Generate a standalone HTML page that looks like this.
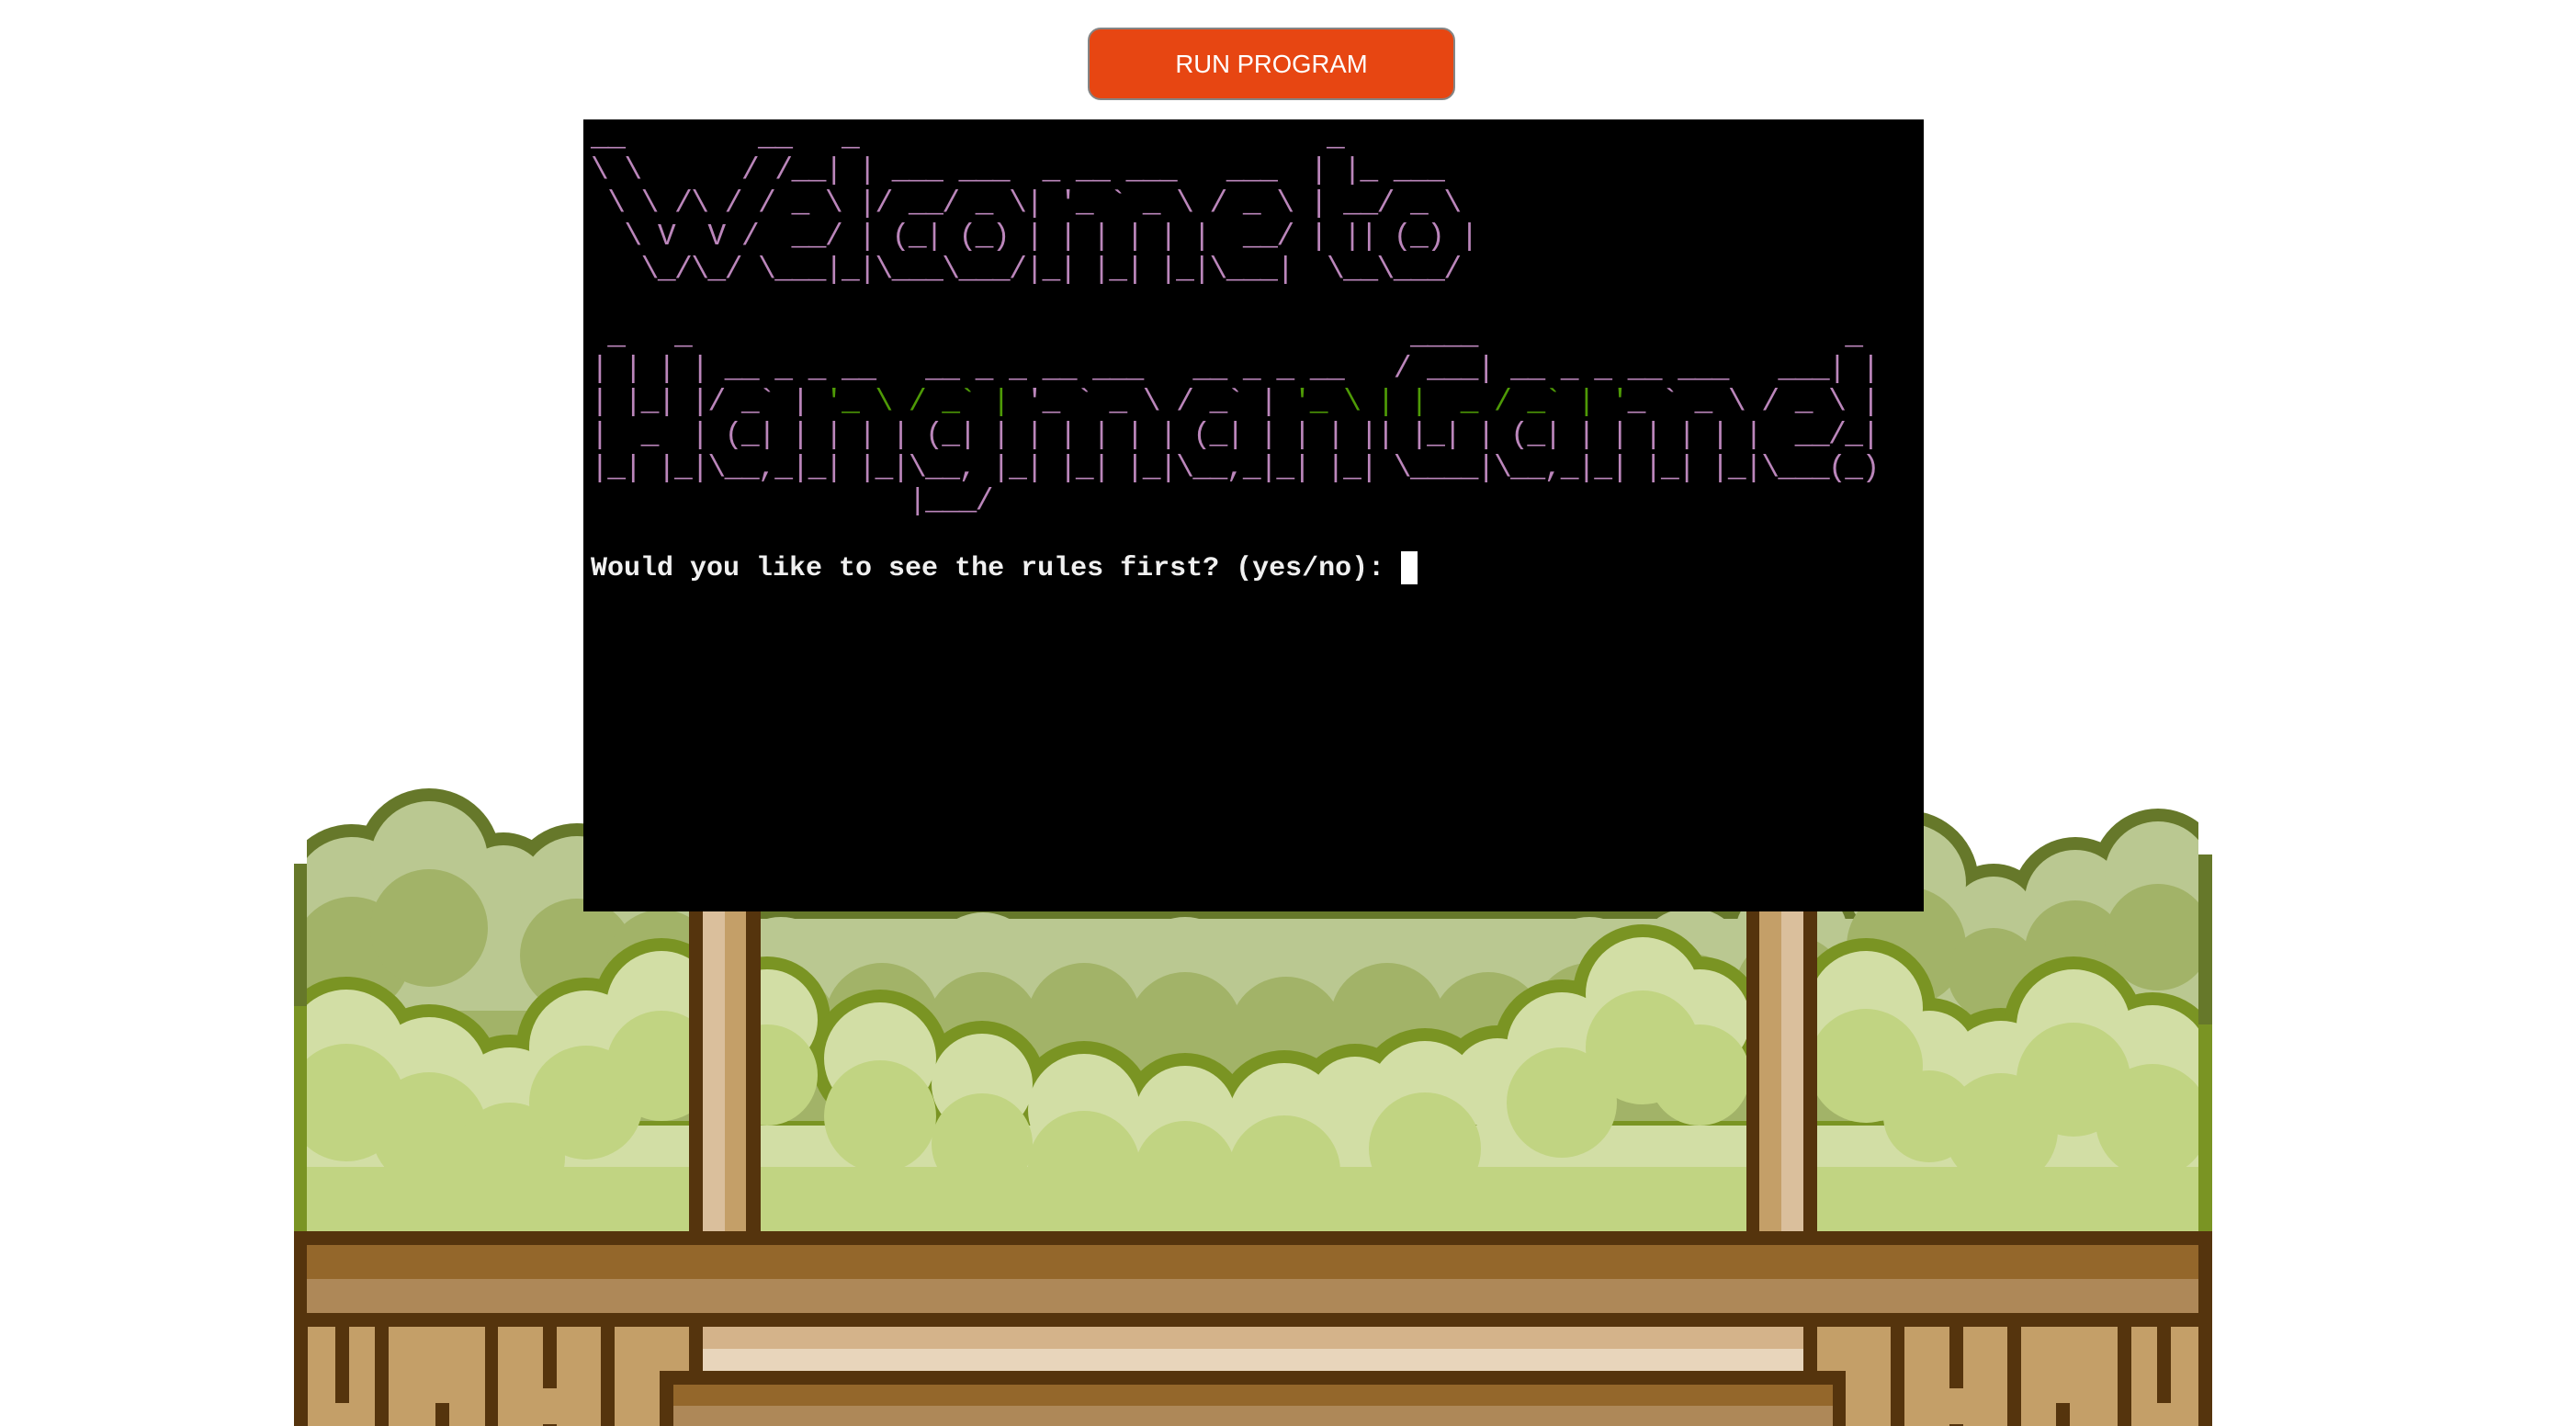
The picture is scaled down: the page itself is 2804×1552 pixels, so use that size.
<!DOCTYPE html>
<html><head><meta charset="utf-8">
<style>
html,body{margin:0;padding:0;background:#fff;width:2804px;height:1552px;overflow:hidden;position:relative}
#scene{position:absolute;left:0;top:0}
#btn{position:absolute;left:1184px;top:30px;width:396px;height:75px;background:#e74612;border:2px solid #858585;border-radius:14px;color:#fff;font-family:"Liberation Sans",sans-serif;font-size:27.5px;text-align:center;line-height:75px}
#term{position:absolute;left:635px;top:130px;width:1459px;height:862px;background:#000}
pre{position:absolute;left:8px;top:2px;margin:0;font-family:"Liberation Mono",monospace;font-size:33px;letter-spacing:-1.6px;line-height:36px;color:#bb86bb;white-space:pre}
.g{color:#4e9a06}
.p{color:#f0f0f0;font-weight:bold;font-size:30px;letter-spacing:0px}
.cur{display:inline-block;width:18px;height:36px;background:#fff;vertical-align:top}
</style></head><body>
<svg id="scene" width="2804" height="1552" viewBox="0 0 2804 1552">
<defs><clipPath id="c"><rect x="334" y="850" width="2059" height="500"/></clipPath></defs>
<g clip-path="url(#c)">
<g fill="#66782a">
<circle cx="383" cy="975" r="78"/><circle cx="467" cy="936" r="78"/><circle cx="548" cy="968" r="62"/><circle cx="628" cy="972" r="76"/><circle cx="720" cy="985" r="74"/>
<circle cx="850" cy="1060" r="76"/><circle cx="960" cy="1065" r="76"/><circle cx="1070" cy="1055" r="76"/><circle cx="1180" cy="1070" r="76"/><circle cx="1290" cy="1060" r="76"/><circle cx="1400" cy="1080" r="76"/><circle cx="1510" cy="1065" r="76"/><circle cx="1620" cy="1075" r="76"/><circle cx="1730" cy="1060" r="76"/><circle cx="1840" cy="1050" r="76"/><circle cx="1950" cy="1020" r="76"/>
<circle cx="2075" cy="961" r="79"/><circle cx="2170" cy="1000" r="60"/><circle cx="2259" cy="980" r="69"/><circle cx="2349" cy="952" r="72"/>
<rect x="320" y="990" width="2100" height="360"/>
</g>
<g fill="#bac891">
<circle cx="383" cy="975" r="64"/><circle cx="467" cy="936" r="64"/><circle cx="548" cy="968" r="48"/><circle cx="628" cy="972" r="62"/><circle cx="720" cy="985" r="60"/>
<circle cx="850" cy="1060" r="62"/><circle cx="960" cy="1065" r="62"/><circle cx="1070" cy="1055" r="62"/><circle cx="1180" cy="1070" r="62"/><circle cx="1290" cy="1060" r="62"/><circle cx="1400" cy="1080" r="62"/><circle cx="1510" cy="1065" r="62"/><circle cx="1620" cy="1075" r="62"/><circle cx="1730" cy="1060" r="62"/><circle cx="1840" cy="1050" r="62"/><circle cx="1950" cy="1020" r="62"/>
<circle cx="2075" cy="961" r="65"/><circle cx="2170" cy="1000" r="46"/><circle cx="2259" cy="980" r="55"/><circle cx="2349" cy="952" r="58"/>
<rect x="334" y="1000" width="2059" height="350"/>
</g>
<g fill="#a2b368">
<circle cx="383" cy="1040" r="64"/><circle cx="467" cy="1010" r="64"/><circle cx="628" cy="1040" r="62"/><circle cx="720" cy="1050" r="60"/>
<circle cx="850" cy="1120" r="62"/><circle cx="960" cy="1110" r="62"/><circle cx="1070" cy="1120" r="62"/><circle cx="1180" cy="1110" r="62"/><circle cx="1290" cy="1120" r="62"/><circle cx="1400" cy="1125" r="62"/><circle cx="1510" cy="1110" r="62"/><circle cx="1620" cy="1120" r="62"/><circle cx="1730" cy="1110" r="62"/><circle cx="1840" cy="1100" r="62"/><circle cx="1950" cy="1080" r="62"/>
<circle cx="2075" cy="1030" r="65"/><circle cx="2170" cy="1060" r="50"/><circle cx="2259" cy="1035" r="55"/><circle cx="2349" cy="1020" r="58"/>
<rect x="334" y="1100" width="2059" height="250"/>
</g>
<g fill="#7a9423">
<circle cx="377" cy="1141" r="78"/><circle cx="467" cy="1170" r="77"/><circle cx="555" cy="1200" r="74"/><circle cx="638" cy="1140" r="76"/><circle cx="720" cy="1095" r="74"/><circle cx="835" cy="1110" r="69"/>
<circle cx="958" cy="1152" r="75"/><circle cx="1069" cy="1180" r="69"/><circle cx="1180" cy="1208" r="75"/><circle cx="1290" cy="1215" r="69"/><circle cx="1398" cy="1218" r="75"/><circle cx="1475" cy="1200" r="64"/><circle cx="1551" cy="1194" r="75"/><circle cx="1630" cy="1180" r="64"/><circle cx="1700" cy="1140" r="74"/><circle cx="1788" cy="1082" r="76"/><circle cx="1850" cy="1110" r="69"/>
<circle cx="2031" cy="1097" r="76"/><circle cx="2100" cy="1150" r="64"/><circle cx="2178" cy="1173" r="76"/><circle cx="2257" cy="1117" r="76"/><circle cx="2343" cy="1156" r="76"/>
<rect x="320" y="1220" width="2100" height="130"/>
</g>
<g fill="#d2dea5">
<circle cx="377" cy="1141" r="64"/><circle cx="467" cy="1170" r="63"/><circle cx="555" cy="1200" r="60"/><circle cx="638" cy="1140" r="62"/><circle cx="720" cy="1095" r="60"/><circle cx="835" cy="1110" r="55"/>
<circle cx="958" cy="1152" r="61"/><circle cx="1069" cy="1180" r="55"/><circle cx="1180" cy="1208" r="61"/><circle cx="1290" cy="1215" r="55"/><circle cx="1398" cy="1218" r="61"/><circle cx="1475" cy="1200" r="50"/><circle cx="1551" cy="1194" r="61"/><circle cx="1630" cy="1180" r="50"/><circle cx="1700" cy="1140" r="60"/><circle cx="1788" cy="1082" r="62"/><circle cx="1850" cy="1110" r="55"/>
<circle cx="2031" cy="1097" r="62"/><circle cx="2100" cy="1150" r="50"/><circle cx="2178" cy="1173" r="62"/><circle cx="2257" cy="1117" r="62"/><circle cx="2343" cy="1156" r="62"/>
<rect x="334" y="1225" width="2059" height="125"/>
</g>
<g fill="#c1d482">
<circle cx="377" cy="1200" r="64"/><circle cx="467" cy="1230" r="63"/><circle cx="555" cy="1260" r="60"/><circle cx="638" cy="1200" r="62"/><circle cx="720" cy="1160" r="60"/><circle cx="835" cy="1170" r="55"/>
<circle cx="958" cy="1215" r="61"/><circle cx="1069" cy="1245" r="55"/><circle cx="1180" cy="1270" r="61"/><circle cx="1290" cy="1275" r="55"/><circle cx="1398" cy="1275" r="61"/><circle cx="1551" cy="1250" r="61"/><circle cx="1700" cy="1200" r="60"/><circle cx="1788" cy="1140" r="62"/><circle cx="1850" cy="1170" r="55"/>
<circle cx="2031" cy="1160" r="62"/><circle cx="2100" cy="1215" r="50"/><circle cx="2178" cy="1230" r="62"/><circle cx="2257" cy="1175" r="62"/><circle cx="2343" cy="1220" r="62"/>
<rect x="334" y="1270" width="2059" height="80"/>
</g>
</g>
<rect x="320" y="940" width="14" height="155" fill="#66782a"/>
<rect x="320" y="1095" width="14" height="250" fill="#7a9423"/>
<rect x="2393" y="930" width="15" height="185" fill="#66782a"/>
<rect x="2393" y="1115" width="15" height="230" fill="#7a9423"/>
<rect x="750" y="990" width="78" height="360" fill="#55340d"/>
<rect x="765" y="990" width="24" height="350" fill="#dabf9c"/>
<rect x="789" y="990" width="23" height="350" fill="#c49f68"/>
<rect x="1901" y="990" width="77" height="360" fill="#55340d"/>
<rect x="1915" y="990" width="24" height="350" fill="#c49f68"/>
<rect x="1939" y="990" width="24" height="350" fill="#dabf9c"/>
<rect x="320" y="1340" width="2088" height="212" fill="#55340d"/>
<rect x="334" y="1355" width="2059" height="37" fill="#94672b"/>
<rect x="334" y="1392" width="2059" height="37" fill="#ae8858"/>
<rect x="335" y="1444" width="2058" height="108" fill="#c49f68"/>
<rect x="765" y="1444" width="1198" height="24" fill="#d4b38a"/>
<rect x="765" y="1468" width="1198" height="24" fill="#e8d5bb"/>
<g fill="#55340d">
<rect x="365" y="1444" width="15" height="83"/><rect x="408" y="1444" width="15" height="108"/><rect x="474" y="1527" width="15" height="25"/><rect x="528" y="1444" width="14" height="108"/><rect x="591" y="1444" width="15" height="67"/><rect x="591" y="1550" width="15" height="2"/><rect x="654" y="1444" width="15" height="108"/><rect x="750" y="1444" width="15" height="48"/>
<rect x="1963" y="1444" width="15" height="48"/><rect x="2058" y="1444" width="15" height="108"/><rect x="2122" y="1444" width="15" height="67"/><rect x="2122" y="1550" width="15" height="2"/><rect x="2185" y="1444" width="15" height="108"/><rect x="2238" y="1527" width="15" height="25"/><rect x="2305" y="1444" width="15" height="108"/><rect x="2348" y="1444" width="15" height="83"/>
<rect x="718" y="1492" width="1291" height="60"/>
</g>
<rect x="733" y="1507" width="1262" height="23" fill="#94672b"/>
<rect x="733" y="1530" width="1262" height="22" fill="#ae8858"/>
</svg>
<div id="btn">RUN PROGRAM</div>
<div id="term"><pre>__        __   _                            _        
\ \      / /__| | ___ ___  _ __ ___   ___  | |_ ___  
 \ \ /\ / / _ \ |/ __/ _ \| '_ ` _ \ / _ \ | __/ _ \ 
  \ V  V /  __/ | (_| (_) | | | | | |  __/ | || (_) |
   \_/\_/ \___|_|\___\___/|_| |_| |_|\___|  \__\___/ 

 _   _                                           ____                      _ 
| | | | __ _ _ __   __ _ _ __ ___   __ _ _ __   / ___| __ _ _ __ ___   ___| |
| |_| |/ _` | <span class="g">'_ \ / _` |</span> '_ ` _ \ / _` | <span class="g">'_ \ | |  _ / _` | '</span>_ ` _ \ / _ \ |
|  _  | (_| | | | | (_| | | | | | | (_| | | | || |_| | (_| | | | | | |  __/_|
|_| |_|\__,_|_| |_|\__, |_| |_| |_|\__,_|_| |_| \____|\__,_|_| |_| |_|\___(_)
                   |___/                                                     

<span class="p">Would you like to see the rules first? (yes/no): </span><span class="cur"></span></pre></div>
</body></html>
